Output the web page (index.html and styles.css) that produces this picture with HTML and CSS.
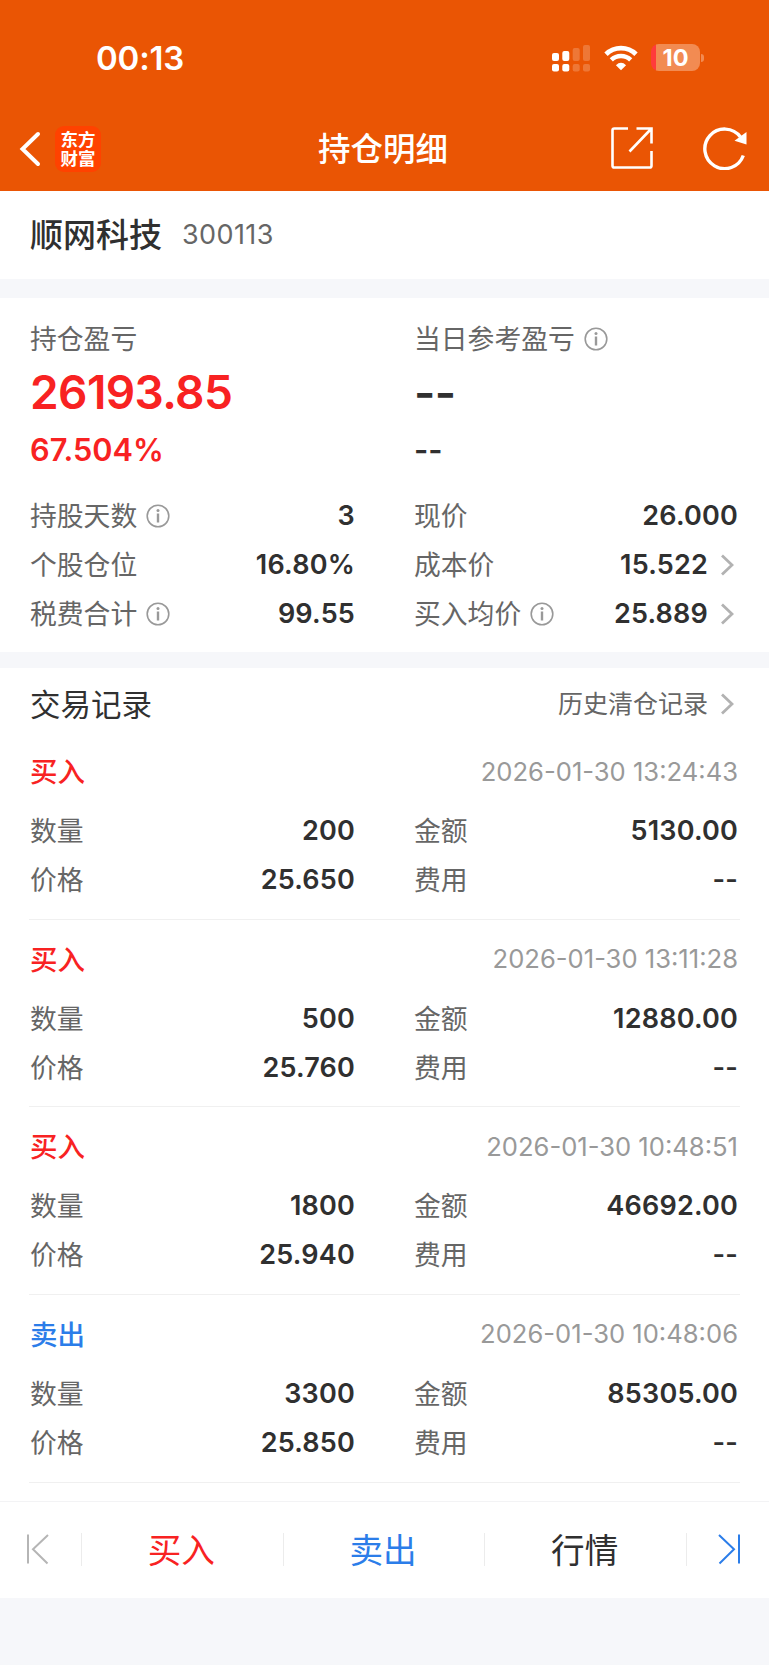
FILE: index.html
```html
<!DOCTYPE html>
<html lang="zh-CN">
<head>
    <meta charset="UTF-8">
    <meta name="viewport" content="width=device-width, initial-scale=1.0">
    <title>持仓明细</title>
    <link rel="stylesheet" href="styles.css">
</head>
<body>
    <svg width="0" height="0" class="symbols">
        <symbol id="info" viewBox="0 0 24 24">
            <circle cx="12" cy="12" r="10.8" fill="none" stroke="#999" stroke-width="1.6"/>
            <circle cx="12" cy="6.4" r="1.5" fill="#999"/>
            <path d="M12 9.5v9" stroke="#999" stroke-width="2.4"/>
        </symbol>
        <symbol id="arrow" viewBox="0 0 14 22">
            <path d="M2 1.5L12 11L2 20.5" fill="none" stroke="#b2b2b2" stroke-width="2.8"/>
        </symbol>
    </svg>

    <div class="header">
        <div class="status-bar">
            <span class="time">00:13</span>
            <div class="status-icons">
                <svg class="signal" width="38" height="28" viewBox="0 0 38 28" fill="#fff">
                    <rect x="0" y="9" width="7" height="8" rx="2"/>
                    <rect x="0" y="20" width="7" height="7.5" rx="2"/>
                    <rect x="10.3" y="7" width="7" height="10" rx="2"/>
                    <rect x="10.3" y="20" width="7" height="7.5" rx="2"/>
                    <g opacity="0.2">
                        <rect x="20.7" y="4" width="7" height="13" rx="2"/>
                        <rect x="20.7" y="20" width="7" height="7.5" rx="2"/>
                        <rect x="31" y="1" width="7" height="16" rx="2"/>
                        <rect x="31" y="20" width="7" height="7.5" rx="2"/>
                    </g>
                </svg>
                <svg class="wifi" width="34" height="26" viewBox="0 0 34 26">
                    <path d="M2 9.2A21.5 21.5 0 0 1 32 9.2" fill="none" stroke="#fff" stroke-width="4.8"/>
                    <path d="M7.3 14.9A14 14 0 0 1 26.7 14.9" fill="none" stroke="#fff" stroke-width="4.6"/>
                    <path d="M17 25.2L11.9 20.2Q17 15.4 22.1 20.2Z" fill="#fff"/>
                </svg>
                <div class="battery"><span>10</span></div>
                <div class="battery-cap"></div>
            </div>
        </div>
        <div class="nav">
            <div class="nav-left">
                <svg width="22" height="36" viewBox="0 0 22 36">
                    <path d="M19 3L3.5 18L19 33" fill="none" stroke="#fff" stroke-width="4" stroke-linecap="round"/>
                </svg>
                <div class="logo">东方<br>财富</div>
            </div>
            <div class="nav-title">持仓明细</div>
            <div class="nav-right">
                <svg width="42" height="42" viewBox="0 0 42 42" fill="none" stroke="#fff" stroke-width="2.6">
                    <path d="M17 1.5H3.3Q1.5 1.5 1.5 3.3V38.7Q1.5 40.5 3.3 40.5H38.7Q40.5 40.5 40.5 38.7V24"/>
                    <path d="M25.5 1.5H40.5V16.5M40 2L18.5 24.5"/>
                </svg>
                <svg width="44" height="44" viewBox="0 0 44 44">
                    <path d="M40.3 29.5A19.8 19.8 0 1 1 37.5 11" fill="none" stroke="#fff" stroke-width="3.4"/>
                    <path d="M43.5 6V18.5L31.5 14.8Z" fill="#fff"/>
                </svg>
            </div>
        </div>
    </div>

    <div class="stock">
        <span class="stock-name">顺网科技</span>
        <span class="stock-code">300113</span>
    </div>

    <div class="summary">
        <div class="column">
            <div class="label">持仓盈亏</div>
            <div class="profit red">26193.85</div>
            <div class="percent red">67.504%</div>
            <div class="row"><span class="label">持股天数<svg class="info"><use href="#info"/></svg></span><b>3</b></div>
            <div class="row"><span class="label">个股仓位</span><b>16.80%</b></div>
            <div class="row"><span class="label">税费合计<svg class="info"><use href="#info"/></svg></span><b>99.55</b></div>
        </div>
        <div class="column">
            <div class="label">当日参考盈亏<svg class="info"><use href="#info"/></svg></div>
            <div class="profit">--</div>
            <div class="percent">--</div>
            <div class="row"><span class="label">现价</span><b>26.000</b></div>
            <div class="row"><span class="label">成本价</span><b>15.522<svg class="arrow"><use href="#arrow"/></svg></b></div>
            <div class="row"><span class="label">买入均价<svg class="info"><use href="#info"/></svg></span><b>25.889<svg class="arrow"><use href="#arrow"/></svg></b></div>
        </div>
    </div>

    <div class="records">
        <div class="records-header">
            <span class="records-title">交易记录</span>
            <span class="history"><span>历史清仓记录</span><svg class="arrow"><use href="#arrow"/></svg></span>
        </div>

        <div class="record">
            <div class="record-top"><span class="type red">买入</span><span class="date">2026-01-30 13:24:43</span></div>
            <div class="grid">
                <div class="row"><span class="label">数量</span><b>200</b></div>
                <div class="row"><span class="label">金额</span><b>5130.00</b></div>
                <div class="row"><span class="label">价格</span><b>25.650</b></div>
                <div class="row"><span class="label">费用</span><b>--</b></div>
            </div>
        </div>
        <div class="record">
            <div class="record-top"><span class="type red">买入</span><span class="date">2026-01-30 13:11:28</span></div>
            <div class="grid">
                <div class="row"><span class="label">数量</span><b>500</b></div>
                <div class="row"><span class="label">金额</span><b>12880.00</b></div>
                <div class="row"><span class="label">价格</span><b>25.760</b></div>
                <div class="row"><span class="label">费用</span><b>--</b></div>
            </div>
        </div>
        <div class="record">
            <div class="record-top"><span class="type red">买入</span><span class="date">2026-01-30 10:48:51</span></div>
            <div class="grid">
                <div class="row"><span class="label">数量</span><b>1800</b></div>
                <div class="row"><span class="label">金额</span><b>46692.00</b></div>
                <div class="row"><span class="label">价格</span><b>25.940</b></div>
                <div class="row"><span class="label">费用</span><b>--</b></div>
            </div>
        </div>
        <div class="record">
            <div class="record-top"><span class="type blue">卖出</span><span class="date">2026-01-30 10:48:06</span></div>
            <div class="grid">
                <div class="row"><span class="label">数量</span><b>3300</b></div>
                <div class="row"><span class="label">金额</span><b>85305.00</b></div>
                <div class="row"><span class="label">价格</span><b>25.850</b></div>
                <div class="row"><span class="label">费用</span><b>--</b></div>
            </div>
        </div>
    </div>

    <div class="footer">
        <div class="step prev">
            <svg width="24" height="32" viewBox="0 0 24 32" fill="none" stroke="#b5b5b5" stroke-width="2">
                <path d="M2 1.5V30.5M22 2L7 16.2L21.5 30.5"/>
            </svg>
        </div>
        <div class="action red">买入</div>
        <div class="action blue">卖出</div>
        <div class="action">行情</div>
        <div class="step next">
            <svg width="24" height="32" viewBox="0 0 24 32" fill="none" stroke="#2b7de9" stroke-width="2">
                <path d="M22 1.5V30.5M2 2L17 16.2L2.5 30.5"/>
            </svg>
        </div>
    </div>
</body>
</html>
```

FILE: styles.css
```css
* {
    box-sizing: border-box;
}
body {
    margin: 0;
    background-color: #f6f7fa;
    color: #303030;
    font-family: Inter, "Noto Sans CJK SC", sans-serif;
    font-size: 27px;
}
svg {
    display: block;
    flex-shrink: 0;
}
.symbols {
    display: none;
}
.red {
    color: #f82222;
}
.blue {
    color: #2b7de9;
}
.header {
    height: 191px;
    background-color: #ea5504;
    color: #fff;
}
.status-bar {
    height: 106px;
    padding: 10px 65px 0 96px;
    display: flex;
    justify-content: space-between;
    align-items: center;
}
.time {
    font-size: 33px;
    font-weight: 600;
    letter-spacing: -0.2px;
    line-height: 40px;
    padding-bottom: 1px;
}
.status-icons {
    display: flex;
    align-items: center;
    padding-bottom: 1px;
}
.signal {
    margin-right: 14px;
}
.wifi {
    margin-right: 13px;
}
.battery {
    width: 49px;
    height: 27px;
    border-radius: 8px;
    background: linear-gradient(to right, #ff3b3b 5px, #f28b52 5px);
    font-size: 23.5px;
    font-weight: 700;
    line-height: 27px;
    text-align: center;
}
.battery-cap {
    width: 3px;
    height: 8px;
    margin-left: 1px;
    border-radius: 0 4px 4px 0;
    background-color: #f28b52;
}
.nav {
    height: 85px;
    padding: 0 22px 0 19px;
    display: grid;
    grid-template-columns: 1fr auto 1fr;
    align-items: center;
}
.nav-left {
    display: flex;
    align-items: center;
    gap: 14px;
}
.logo {
    width: 46px;
    height: 46px;
    padding-top: 4px;
    border-radius: 9px;
    background-color: #ff4200;
    font-size: 17.5px;
    font-weight: 700;
    line-height: 19px;
    text-align: center;
}
.nav-title {
    padding-bottom: 4px;
    font-size: 32.5px;
    font-weight: 500;
}
.nav-right {
    padding-bottom: 1px;
    display: flex;
    justify-content: flex-end;
    align-items: center;
    gap: 50px;
}
.stock {
    height: 88px;
    padding: 0 30px 2px;
    display: flex;
    align-items: center;
    gap: 20px;
    background-color: #fff;
}
.stock-name {
    padding-bottom: 3px;
    font-size: 33px;
    font-weight: 500;
}
.stock-code {
    color: #666;
    font-size: 27px;
    letter-spacing: 0.4px;
}
.summary {
    height: 354px;
    margin-top: 19px;
    padding: 20px 31px 0 30px;
    display: grid;
    grid-template-columns: 325px 324px;
    column-gap: 59px;
    background-color: #fff;
}
.label {
    height: 40px;
    padding-top: 1px;
    display: flex;
    align-items: center;
    color: #666;
    font-size: 26.8px;
    line-height: 40px;
}
.info {
    width: 24px;
    height: 24px;
    margin-left: 9px;
}
.profit {
    height: 66px;
    padding-top: 1px;
    font-size: 46px;
    font-weight: 600;
    letter-spacing: -0.6px;
    line-height: 66px;
}
.percent {
    height: 66px;
    margin-bottom: 1px;
    font-size: 30.7px;
    font-weight: 600;
    line-height: 51px;
}
.row {
    height: 49px;
    display: flex;
    justify-content: space-between;
    align-items: center;
}
.row b {
    display: flex;
    align-items: center;
    font-weight: 600;
    letter-spacing: 0.2px;
}
.arrow {
    width: 14px;
    height: 22px;
    margin: 0 4px 0 12px;
}
.records {
    height: 833px;
    margin-top: 16px;
    padding: 0 29px;
    background-color: #fff;
}
.records-header {
    height: 64px;
    padding: 5px 2px 0 1px;
    display: flex;
    justify-content: space-between;
    align-items: center;
}
.records-title {
    font-size: 30.5px;
}
.history {
    padding-top: 2px;
    display: flex;
    align-items: center;
    color: #666;
    font-size: 25px;
}
.history span {
    padding-bottom: 3px;
}
.record {
    height: 187.67px;
    padding: 20px 1px 0;
    border-bottom: 1px solid #f0f0f0;
}
.record-top {
    height: 38px;
    margin-bottom: 16px;
    padding-right: 1px;
    display: flex;
    justify-content: space-between;
    align-items: center;
}
.type {
    padding-bottom: 2px;
    font-size: 27.5px;
    font-weight: 500;
}
.date {
    color: #999;
    font-size: 25.6px;
}
.grid {
    display: grid;
    grid-template-columns: 325px 324px;
    column-gap: 59px;
}
.footer {
    height: 97px;
    padding: 1px 0 3px;
    border-top: 1px solid #f3f3f5;
    display: flex;
    align-items: center;
    background-color: #fff;
}
.action {
    flex: 1;
    height: 33px;
    padding: 1px 2px 0 0;
    border-right: 1px solid #ececec;
    font-size: 33.6px;
    line-height: 33px;
    text-align: center;
}
.step {
    width: 82px;
    height: 33px;
    display: flex;
    align-items: center;
}
.prev {
    padding-left: 26px;
    border-right: 1px solid #ececec;
}
.next {
    padding-left: 30px;
}
```
